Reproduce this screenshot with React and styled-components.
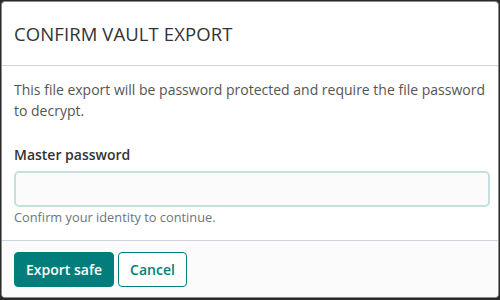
import React from 'react'
import styled, { createGlobalStyle } from 'styled-components'

const GlobalStyle = createGlobalStyle`
  html, body {
    margin: 0;
    padding: 0;
    background: #2a2a2a;
    font-family: "Open Sans", "Liberation Sans", sans-serif;
  }
  #root {
    padding: 1px 1px 1px 1px;
  }
`

const Modal = styled.div`
  background: #ffffff;
  border: 1px solid #8a8a8a;
  border-radius: 4px;
  overflow: hidden;
  display: flex;
  flex-direction: column;
  height: 297px;
  box-sizing: border-box;
`

const Header = styled.div`
  height: 63px;
  display: flex;
  align-items: center;
  padding: 0 12px;
  border-bottom: 1px solid #ced4da;
  flex-shrink: 0;
`

const Title = styled.h5`
  margin: 0;
  font-size: 18.5px;
  font-weight: 400;
  color: #333333;
  letter-spacing: 0.1px;
`

const Body = styled.div`
  padding: 13px 8px 14px 12px;
  color: #555555;
  font-size: 14px;
  line-height: 21px;
`

const Text = styled.p`
  margin: 0 0 23px;
  padding-right: 4px;
`

const Label = styled.label`
  display: block;
  font-weight: 600;
  color: #333333;
  margin-bottom: 6px;
`

const Input = styled.input`
  display: block;
  width: 100%;
  box-sizing: border-box;
  height: 36px;
  border: 2px solid #c4e1df;
  border-radius: 5px;
  background: #fbfbfb;
  outline: none;
`

const Help = styled.small`
  display: block;
  margin-top: 1px;
  font-size: 12.8px;
  line-height: 18px;
  color: #6c757d;
`

const Footer = styled.div`
  flex: 1;
  background: #fbfbfb;
  border-top: 1px solid #ced4da;
  display: flex;
  align-items: center;
  gap: 4px;
  padding: 0 12px;
`

const Button = styled.button`
  height: 35px;
  padding: 0 11px;
  border-radius: 4px;
  font-family: inherit;
  font-size: 14px;
  font-weight: 600;
  cursor: pointer;
  border: 1px solid #017e7c;
  color: ${(p) => (p.primary ? '#ffffff' : '#017e7c')};
  background: ${(p) => (p.primary ? '#017e7c' : '#ffffff')};
`

export default function App() {
  return (
    <>
      <GlobalStyle />
      <Modal>
        <Header>
          <Title>CONFIRM VAULT EXPORT</Title>
        </Header>
        <Body>
          <Text>
            This file export will be password protected and require the file password to decrypt.
          </Text>
          <Label>Master password</Label>
          <Input type="password" />
          <Help>Confirm your identity to continue.</Help>
        </Body>
        <Footer>
          <Button primary>Export safe</Button>
          <Button>Cancel</Button>
        </Footer>
      </Modal>
    </>
  )
}
